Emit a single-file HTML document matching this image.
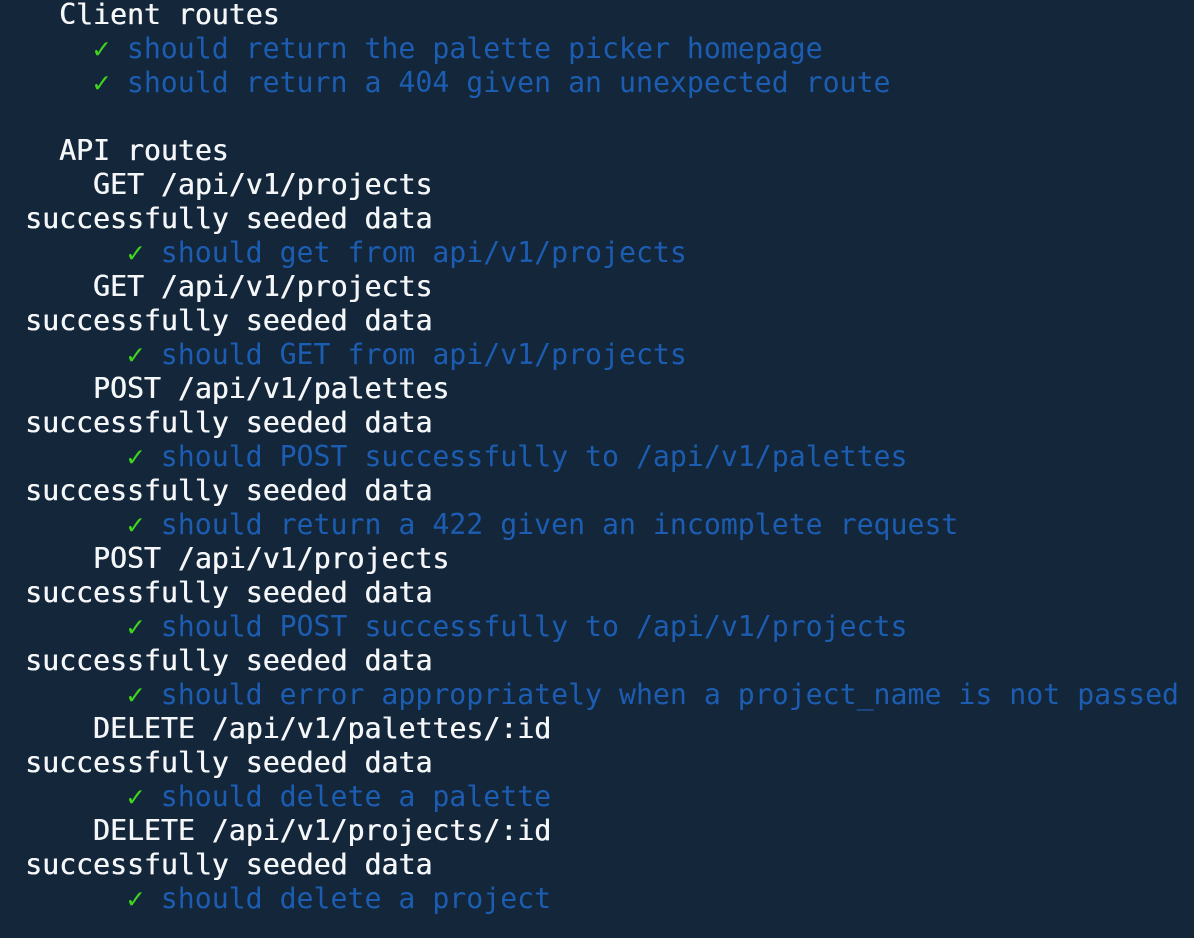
<!DOCTYPE html>
<html><head><meta charset="utf-8"><style>
html,body{margin:0;padding:0;background:#13263a;width:1194px;height:938px;overflow:hidden}
pre{margin:0;position:absolute;left:25px;top:-2px;font-family:"DejaVu Sans Mono","Liberation Mono",monospace;font-size:28.2px;line-height:34px;color:#f4f6f8;letter-spacing:0;text-shadow:0.5px 0 0 #f4f6f8}
.g{color:#3fd41e;font-weight:bold;text-shadow:none}.b{color:#1c5db2;text-shadow:none}
</style></head><body><pre>  Client routes
    <span class="g">✓</span> <span class="b">should return the palette picker homepage</span>
    <span class="g">✓</span> <span class="b">should return a 404 given an unexpected route</span>

  API routes
    GET /api/v1/projects
successfully seeded data
      <span class="g">✓</span> <span class="b">should get from api/v1/projects</span>
    GET /api/v1/projects
successfully seeded data
      <span class="g">✓</span> <span class="b">should GET from api/v1/projects</span>
    POST /api/v1/palettes
successfully seeded data
      <span class="g">✓</span> <span class="b">should POST successfully to /api/v1/palettes</span>
successfully seeded data
      <span class="g">✓</span> <span class="b">should return a 422 given an incomplete request</span>
    POST /api/v1/projects
successfully seeded data
      <span class="g">✓</span> <span class="b">should POST successfully to /api/v1/projects</span>
successfully seeded data
      <span class="g">✓</span> <span class="b">should error appropriately when a project_name is not passed</span>
    DELETE /api/v1/palettes/:id
successfully seeded data
      <span class="g">✓</span> <span class="b">should delete a palette</span>
    DELETE /api/v1/projects/:id
successfully seeded data
      <span class="g">✓</span> <span class="b">should delete a project</span>
</pre></body></html>
